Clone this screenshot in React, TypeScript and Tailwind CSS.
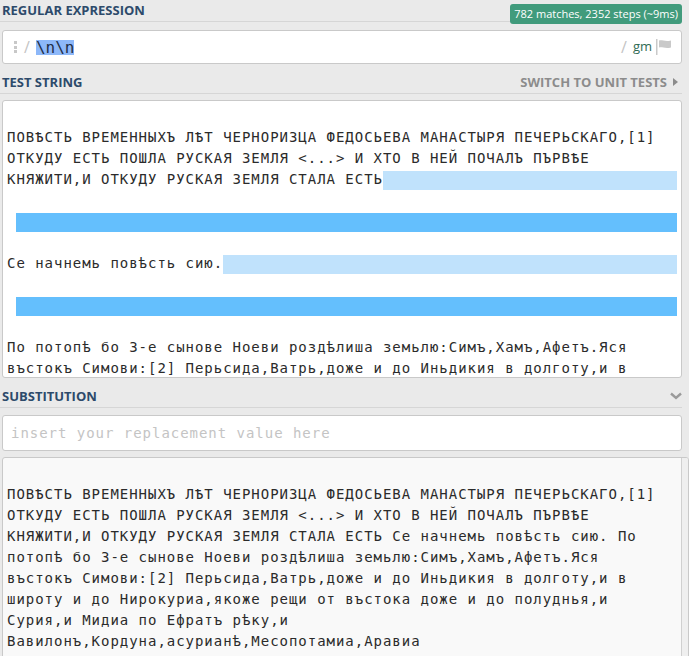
import React from "react";

type Line = { text?: string; hl?: "light" | "dark" };

const testLines: Line[] = [
  {},
  { text: "ПОВѢСТЬ ВРЕМЕННЫХЪ ЛѢТ ЧЕРНОРИЗЦА ФЕДОСЬЕВА МАНАСТЫРЯ ПЕЧЕРЬСКАГО,[1]" },
  { text: "ОТКУДУ ЕСТЬ ПОШЛА РУСКАЯ ЗЕМЛЯ <...> И ХТО В НЕЙ ПОЧАЛЪ ПЪРВѢЕ" },
  { text: "КНЯЖИТИ,И ОТКУДУ РУСКАЯ ЗЕМЛЯ СТАЛА ЕСТЬ", hl: "light" },
  {},
  { hl: "dark" },
  {},
  { text: "Се начнемь повѣсть сию.", hl: "light" },
  {},
  { hl: "dark" },
  {},
  { text: "По потопѣ бо 3-е сынове Ноеви роздѣлиша земьлю:Симъ,Хамъ,Афетъ.Яся" },
  { text: "въстокъ Симови:[2] Перьсида,Ватрь,доже и до Иньдикия в долготу,и в" },
];

const resultLines = [
  "",
  "ПОВѢСТЬ ВРЕМЕННЫХЪ ЛѢТ ЧЕРНОРИЗЦА ФЕДОСЬЕВА МАНАСТЫРЯ ПЕЧЕРЬСКАГО,[1]",
  "ОТКУДУ ЕСТЬ ПОШЛА РУСКАЯ ЗЕМЛЯ <...> И ХТО В НЕЙ ПОЧАЛЪ ПЪРВѢЕ",
  "КНЯЖИТИ,И ОТКУДУ РУСКАЯ ЗЕМЛЯ СТАЛА ЕСТЬ Се начнемь повѣсть сию. По",
  "потопѣ бо 3-е сынове Ноеви роздѣлиша земьлю:Симъ,Хамъ,Афетъ.Яся",
  "въстокъ Симови:[2] Перьсида,Ватрь,доже и до Иньдикия в долготу,и в",
  "широту и до Нирокуриа,якоже рещи от въстока доже и до полуднья,и",
  "Сурия,и Мидиа по Ефратъ рѣку,и",
  "Вавилонъ,Кордуна,асурианѣ,Месопотамиа,Аравиа",
];

function SectionHeader({ title, right }: { title: string; right?: React.ReactNode }) {
  return (
    <div className="flex h-[22px] w-[682px] items-start justify-between border-b border-[#d6d6d6]">
      <h2 className="pl-[2px] pt-[2px] font-['Open_Sans',sans-serif] text-[13px] font-bold leading-[16px] text-[#2d4a6b] uppercase">
        {title}
      </h2>
      {right}
    </div>
  );
}

function FlagIcon() {
  return (
    <svg width="16" height="16" viewBox="0 0 16 16" className="ml-[4px]">
      <rect x="0" y="0" width="1.5" height="16" fill="#c9c9c9" />
      <path d="M3 1.5 C6 0.5 9 3 15 1.5 L15 8.5 C9 10 6 7.5 3 8.5 Z" fill="#c9c9c9" />
    </svg>
  );
}

export default function App() {
  return (
    <div className="h-screen overflow-hidden bg-[#eaeaea] font-['Open_Sans',sans-serif]">
      {/* Regular expression */}
      <SectionHeader
        title="Regular Expression"
        right={
          <span className="mr-[0px] mt-[4px] flex h-[20px] items-center rounded-[3px] bg-[#419b7c] px-[4px] text-[11px] text-white">
            782 matches, 2352 steps (~9ms)
          </span>
        }
      />
      <div className="ml-[2px] mt-[8px] flex h-[34px] w-[680px] items-center rounded-[3px] border border-[#c9c9c9] bg-white pl-[11px] pr-[9px]">
        <div className="flex flex-col gap-[1.5px]">
          <span className="h-[3px] w-[3px] bg-[#c8c8c8]" />
          <span className="h-[3px] w-[3px] bg-[#c8c8c8]" />
          <span className="h-[3px] w-[3px] bg-[#c8c8c8]" />
        </div>
        <span className="ml-[7px] text-[16px] text-[#c4c4c4]">/</span>
        <span className="ml-[6px] bg-[#8db8f9] font-['DejaVu_Sans_Mono',monospace] text-[16px] leading-[15px] text-[#1f2f48]">
          \n\n
        </span>
        <div className="flex-1" />
        <span className="text-[16px] text-[#c4c4c4]">/</span>
        <span className="ml-[6px] text-[13px] text-[#2f6b55]">gm</span>
        <FlagIcon />
      </div>

      {/* Test string */}
      <div className="mt-[8px]">
        <SectionHeader
          title="Test String"
          right={
            <span className="flex items-center gap-[6px] pr-[4px] pt-[2px] text-[13px] font-bold leading-[16px] text-[#8c8c8c]">
              SWITCH TO UNIT TESTS
              <svg width="5" height="8" viewBox="0 0 5 8">
                <path d="M0 0 L5 4 L0 8 Z" fill="#8c8c8c" />
              </svg>
            </span>
          }
        />
      </div>
      <div className="ml-[2px] mt-[6px] h-[278px] w-[680px] overflow-hidden rounded-[3px] border border-[#c9c9c9] bg-white pl-[4px] pr-[4px] pt-[5px] font-['DejaVu_Sans_Mono',monospace] text-[14px] leading-[21px] tracking-[0.97px] text-[#2b2b2b]">
        {testLines.map((line, i) => (
          <div key={i} className="flex h-[21px]">
            {line.text && <span className="whitespace-pre">{line.text}</span>}
            {line.hl === "light" && <span className="mt-[2px] h-[19px] flex-1 bg-[#c0e2fc]" />}
            {line.hl === "dark" && <span className="ml-[9px] mt-[2px] h-[19px] flex-1 bg-[#64bffd]" />}
          </div>
        ))}
      </div>

      {/* Substitution */}
      <div className="mt-[8px]">
        <SectionHeader
          title="Substitution"
          right={
            <svg width="12" height="8" viewBox="0 0 12 8" className="mt-[6px]">
              <path d="M1 1.5 L6 6 L11 1.5" fill="none" stroke="#9a9a9a" strokeWidth="2.4" />
            </svg>
          }
        />
      </div>
      <div className="ml-[2px] mt-[7px] flex h-[36px] w-[680px] items-center rounded-[3px] border border-[#c9c9c9] bg-white pl-[8px] font-['DejaVu_Sans_Mono',monospace] text-[14px] tracking-[0.97px] text-[#c4c4c4]">
        insert your replacement value here
      </div>
      <div className="ml-[2px] mt-[6px] flex h-[220px] w-[687px] overflow-hidden rounded-[3px] border border-[#c9c9c9] bg-[#f9f9f9]">
        <div className="flex-1 pl-[4px] pt-[5px] font-['DejaVu_Sans_Mono',monospace] text-[14px] leading-[21px] tracking-[0.97px] text-[#2b2b2b]">
          {resultLines.map((t, i) => (
            <div key={i} className="h-[21px] whitespace-pre">
              {t}
            </div>
          ))}
        </div>
        <div className="w-[7px] border-l border-[#d0d0d0] bg-[#efefef]" />
      </div>
    </div>
  );
}
